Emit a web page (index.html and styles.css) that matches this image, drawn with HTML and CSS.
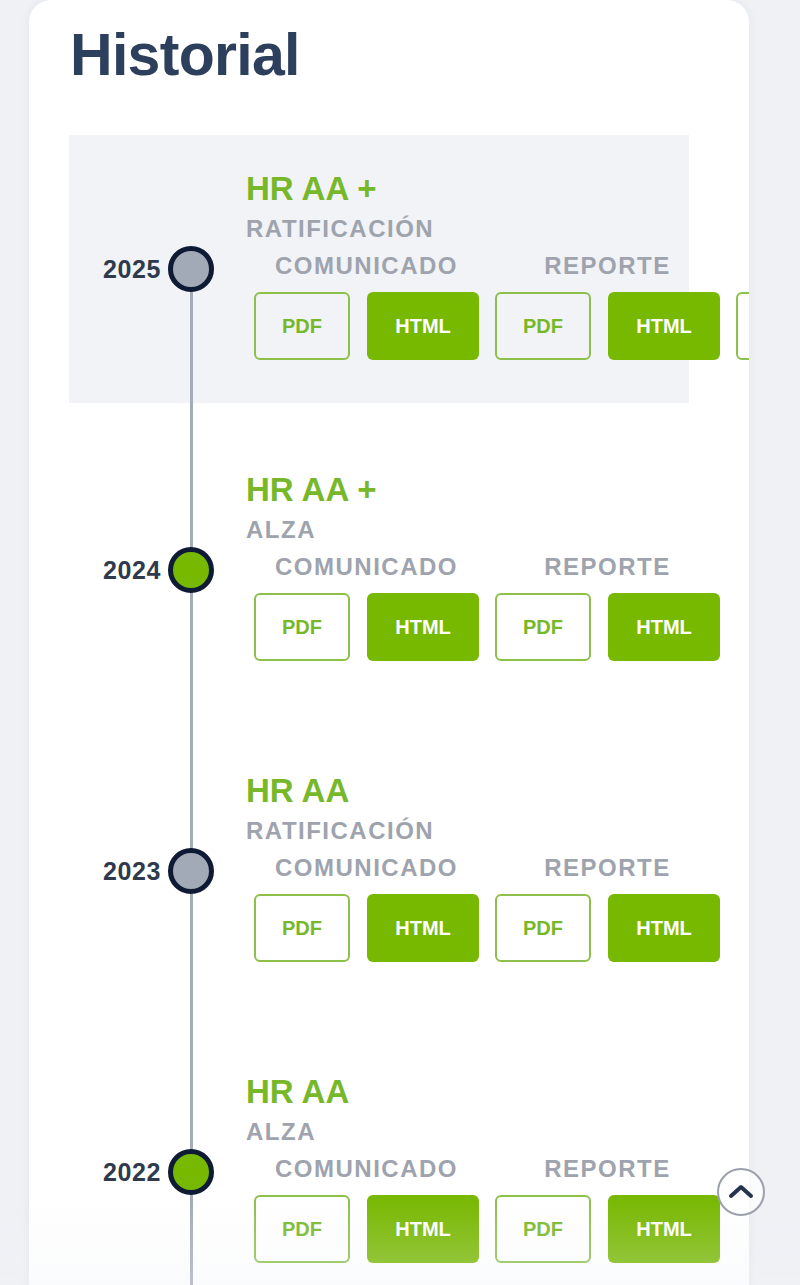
FILE: index.html
```html
<!DOCTYPE html>
<html>
<head>
    <meta charset="utf-8">
    <meta name="viewport" content="width=device-width, initial-scale=1.0">
    <title>Historial</title>
    <link rel="stylesheet" href="styles.css">
</head>
<body>
    <!--tarjeta historial-->
    <div class="card">
        <h1 class="title">Historial</h1>
        <div class="timeline">
            <!--2025-->
            <div class="item active">
                <div class="marker">
                    <span class="year">2025</span>
                    <span class="dot gray"></span>
                </div>
                <div class="content">
                    <div class="rating">HR AA +</div>
                    <div class="action">RATIFICACIÓN</div>
                    <div class="groups">
                        <div class="group">
                            <div class="label">COMUNICADO</div>
                            <div class="btns">
                                <a class="btn outline">PDF</a>
                                <a class="btn solid">HTML</a>
                            </div>
                        </div>
                        <div class="group">
                            <div class="label">REPORTE</div>
                            <div class="btns">
                                <a class="btn outline">PDF</a>
                                <a class="btn solid">HTML</a>
                            </div>
                        </div>
                        <div class="group">
                            <div class="label">ANEXO</div>
                            <div class="btns">
                                <a class="btn outline">PDF</a>
                                <a class="btn solid">HTML</a>
                            </div>
                        </div>
                    </div>
                </div>
            </div>
            <!--2024-->
            <div class="item">
                <div class="marker">
                    <span class="year">2024</span>
                    <span class="dot green"></span>
                </div>
                <div class="content">
                    <div class="rating">HR AA +</div>
                    <div class="action">ALZA</div>
                    <div class="groups">
                        <div class="group">
                            <div class="label">COMUNICADO</div>
                            <div class="btns">
                                <a class="btn outline">PDF</a>
                                <a class="btn solid">HTML</a>
                            </div>
                        </div>
                        <div class="group">
                            <div class="label">REPORTE</div>
                            <div class="btns">
                                <a class="btn outline">PDF</a>
                                <a class="btn solid">HTML</a>
                            </div>
                        </div>
                    </div>
                </div>
            </div>
            <!--2023-->
            <div class="item">
                <div class="marker">
                    <span class="year">2023</span>
                    <span class="dot gray"></span>
                </div>
                <div class="content">
                    <div class="rating">HR AA</div>
                    <div class="action">RATIFICACIÓN</div>
                    <div class="groups">
                        <div class="group">
                            <div class="label">COMUNICADO</div>
                            <div class="btns">
                                <a class="btn outline">PDF</a>
                                <a class="btn solid">HTML</a>
                            </div>
                        </div>
                        <div class="group">
                            <div class="label">REPORTE</div>
                            <div class="btns">
                                <a class="btn outline">PDF</a>
                                <a class="btn solid">HTML</a>
                            </div>
                        </div>
                    </div>
                </div>
            </div>
            <!--2022-->
            <div class="item">
                <div class="marker">
                    <span class="year">2022</span>
                    <span class="dot green"></span>
                </div>
                <div class="content">
                    <div class="rating">HR AA</div>
                    <div class="action">ALZA</div>
                    <div class="groups">
                        <div class="group">
                            <div class="label">COMUNICADO</div>
                            <div class="btns">
                                <a class="btn outline">PDF</a>
                                <a class="btn solid">HTML</a>
                            </div>
                        </div>
                        <div class="group">
                            <div class="label">REPORTE</div>
                            <div class="btns">
                                <a class="btn outline">PDF</a>
                                <a class="btn solid">HTML</a>
                            </div>
                        </div>
                    </div>
                </div>
            </div>
        </div>
    </div>
    <!--volver arriba-->
    <div class="fade"></div>
    <a class="toTop">
        <svg width="26" height="16" viewBox="0 0 26 16">
            <path d="M3 13 L13 4 L23 13" fill="none" stroke="#26344d" stroke-width="4" stroke-linecap="round" stroke-linejoin="round"/>
        </svg>
    </a>
</body>
</html>
```

FILE: styles.css
```css
body {
    margin: 0;
    padding: 0 51px 0 29px;
    background-color: #eff1f5;
    font-family: "Liberation Sans", Arial, sans-serif;
    height: 1285px;
    overflow: hidden;
}
.card {
    background-color: #ffffff;
    border-radius: 22px 22px 0 0;
    box-shadow: 0 0 10px rgba(40, 50, 80, 0.06);
    padding: 22px 0 0 40px;
    overflow: hidden;
    min-height: 1400px;
}
.title {
    margin: 0 0 47px 1px;
    font-size: 59px;
    line-height: 66px;
    letter-spacing: -0.7px;
    color: #2c3f5c;
}
.timeline {
    position: relative;
    width: 620px;
}
.timeline::before {
    content: "";
    position: absolute;
    top: 134px;
    bottom: 0;
    left: 121px;
    width: 3px;
    background-color: #a5abb7;
}
.item {
    display: flex;
    margin-bottom: 33px;
}
.item.active {
    background-color: #f1f3f7;
}
.marker {
    width: 145px;
    flex-shrink: 0;
    align-self: center;
    display: flex;
    align-items: center;
    justify-content: flex-end;
    gap: 7px;
}
.year {
    font-size: 25px;
    font-weight: bold;
    letter-spacing: 0.6px;
    color: #2f3a4d;
}
.dot {
    width: 46px;
    height: 46px;
    box-sizing: border-box;
    border: 5px solid #0f1b35;
    border-radius: 50%;
    position: relative;
    z-index: 1;
}
.dot.gray {
    background-color: #a3aab7;
}
.dot.green {
    background-color: #77b800;
}
.content {
    margin-left: 32px;
    padding: 34px 0 43px;
    flex-shrink: 0;
    white-space: nowrap;
}
.rating {
    font-size: 33px;
    line-height: 40px;
    font-weight: bold;
    color: #77b82a;
}
.action {
    margin-top: 3px;
    font-size: 24px;
    line-height: 34px;
    font-weight: bold;
    letter-spacing: 1.5px;
    color: #9ea3ad;
}
.groups {
    display: flex;
    gap: 16px;
    margin-top: 5px;
    padding-left: 8px;
}
.group {
    display: flex;
    flex-direction: column;
    gap: 11px;
}
.label {
    text-align: center;
    font-size: 24px;
    line-height: 30px;
    font-weight: bold;
    letter-spacing: 1.5px;
    color: #9ea3ad;
}
.btns {
    display: flex;
    gap: 17px;
}
.btn {
    display: flex;
    align-items: center;
    justify-content: center;
    height: 68px;
    box-sizing: border-box;
    border-radius: 6px;
    font-size: 20px;
    font-weight: bold;
}
.btn.outline {
    width: 96px;
    border: 2px solid #8cc04a;
    color: #77b82a;
}
.btn.solid {
    width: 112px;
    background-color: #77b800;
    color: #ffffff;
}
.fade {
    position: fixed;
    left: 0;
    right: 0;
    bottom: 0;
    height: 90px;
    background: linear-gradient(to bottom, rgba(240, 242, 246, 0), rgba(240, 242, 246, 0.3));
    pointer-events: none;
}
.toTop {
    position: fixed;
    left: 717px;
    top: 1168px;
    width: 48px;
    height: 48px;
    box-sizing: border-box;
    border: 2px solid #9aa0ab;
    border-radius: 50%;
    background-color: rgba(255, 255, 255, 0.7);
    display: flex;
    align-items: center;
    justify-content: center;
}
.toTop svg {
    margin-top: -2px;
}
```
